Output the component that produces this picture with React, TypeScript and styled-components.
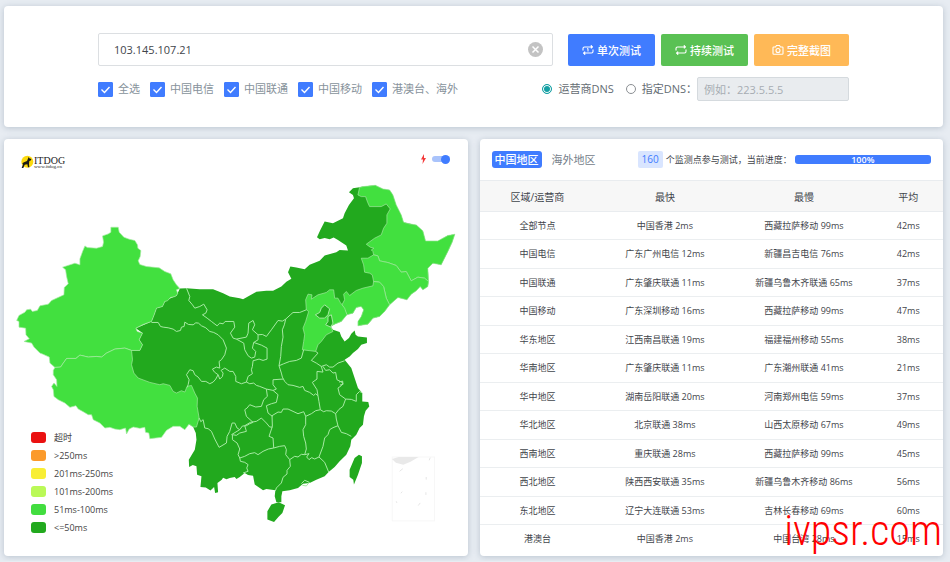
import React, { useState } from "react";
import styled, { createGlobalStyle, css } from "styled-components";

const Global = createGlobalStyle`
  * { box-sizing: border-box; }
  body {
    margin: 0;
    background: #e7ecf2;
    color: #3f454b;
    font-family: "Open Sans", "Noto Sans CJK SC", sans-serif;
    font-size: 11px;
  }
  button, input { font: inherit; }
`;

const Page = styled.main`
  display: flex;
  flex-direction: column;
  gap: 12px;
  padding: 6px 7px 5px 4px;
`;

const Card = styled.section`
  background: #fff;
  border-radius: 4px;
  box-shadow: 0 1px 6px rgba(70, 90, 115, 0.28);
`;

const SearchCard = styled(Card)`
  display: flex;
  flex-direction: column;
  gap: 11px;
  padding: 27px 94px 26px;
`;

const Line = styled.div`
  display: flex;
  align-items: center;
  justify-content: space-between;
  gap: 15px;
`;

const HostBox = styled.label`
  display: flex;
  flex: 1;
  align-items: center;
  height: 33px;
  padding: 0 9px 0 15px;
  border: 1px solid #dcdfe2;
  border-radius: 2px;
`;

const HostInput = styled.input`
  flex: 1;
  min-width: 0;
  padding: 0;
  border: 0;
  outline: 0;
  background: none;
  color: #3f454b;
`;

const ClearButton = styled.button`
  display: flex;
  padding: 0;
  border: 0;
  background: none;
`;

const Actions = styled.div`
  display: flex;
  gap: 6px;
`;

const ActionButton = styled.button<{ $color: string; $wide?: boolean }>`
  display: flex;
  align-items: center;
  justify-content: center;
  gap: 3px;
  height: 32px;
  padding: 0 ${(p) => (p.$wide ? 18 : 14)}px;
  border: 0;
  border-radius: 2px;
  background: ${(p) => p.$color};
  color: #fff;
  font-weight: 500;
  white-space: nowrap;
`;

const Options = styled.div<{ $gap: number }>`
  display: flex;
  align-items: center;
  gap: ${(p) => p.$gap}px;
`;

const Option = styled.label<{ $dark?: boolean }>`
  display: flex;
  align-items: center;
  gap: 5px;
  color: ${(p) => (p.$dark ? "#646c73" : "#87929b")};
  line-height: 16px;
  white-space: nowrap;
`;

const CheckBox = styled.input`
  appearance: none;
  width: 15px;
  height: 15px;
  margin: 0;
  border-radius: 1px;
  background: #fff;
  border: 1px solid #407cff;
  &:checked {
    background: #407cff
      url("data:image/svg+xml,%3Csvg xmlns='http://www.w3.org/2000/svg' viewBox='0 0 13 13'%3E%3Cpath d='M2.5 6.5l3 3 5-5.5' fill='none' stroke='white' stroke-width='1.4'/%3E%3C/svg%3E");
  }
`;

const Radio = styled.input`
  appearance: none;
  width: 10px;
  height: 10px;
  margin: 0 1px 0 0;
  border: 1px solid #8b8f93;
  border-radius: 50%;
  &:checked {
    border-color: #14a0a4;
    background: #14a0a4;
    box-shadow: inset 0 0 0 1px #fff;
  }
`;

const DnsField = styled.div`
  display: flex;
  align-items: center;
`;

const DnsInput = styled.input`
  width: 152px;
  height: 24px;
  padding: 0 6px;
  border: 1px solid #d5dade;
  border-radius: 2px;
  background: #e9ecef;
  &::placeholder { color: #a7adb3; }
`;

const Columns = styled.div`
  display: grid;
  grid-template-columns: 1fr 1fr;
  gap: 12px;
`;

const MapCard = styled(Card)`
  display: grid;
  > * { grid-area: 1 / 1; }
`;

const MapHead = styled.header`
  z-index: 1;
  display: flex;
  align-self: start;
  align-items: flex-start;
  justify-content: space-between;
  padding: 15px 18px 0 16px;
`;

const Brand = styled.div`
  display: flex;
  align-items: center;
  padding-top: 1px;
`;

const BrandName = styled.div`
  display: flex;
  flex-direction: column;
  color: #222;
  font-family: "Liberation Serif", serif;
  font-size: 10px;
  line-height: 9px;
  small { font-size: 5px; line-height: 4px; }
`;

const SwitchLabel = styled.label`
  display: flex;
  align-items: center;
  gap: 5px;
`;

const Switch = styled.input`
  appearance: none;
  display: flex;
  align-items: center;
  justify-content: flex-end;
  width: 18px;
  height: 6px;
  margin: 0;
  border-radius: 3px;
  background: #a9c3fb;
  &::after {
    content: "";
    width: 9px;
    height: 9px;
    border-radius: 50%;
    background: #407cff;
  }
`;

const MapDrawing = styled.svg`
  display: block;
  width: 100%;
`;

const Legend = styled.ul`
  z-index: 1;
  display: flex;
  flex-direction: column;
  align-self: end;
  justify-self: start;
  gap: 6px;
  margin: 0;
  padding: 0 0 22px 27px;
  list-style: none;
`;

const LegendItem = styled.li<{ $color: string }>`
  display: flex;
  align-items: center;
  gap: 8px;
  color: #444;
  font-size: 9px;
  line-height: 12px;
  &::before {
    content: "";
    width: 15px;
    height: 11px;
    border-radius: 3px;
    background: ${(p) => p.$color};
  }
`;

const ResultCard = styled(Card)`
  position: relative;
`;

const ResultHead = styled.header`
  display: flex;
  align-items: center;
  height: 41px;
  padding: 0 12px;
`;

const Tab = styled.button<{ $active?: boolean }>`
  height: 17px;
  padding: 0 3px;
  border: 0;
  border-radius: 3px;
  background: none;
  color: #75808a;
  line-height: 16px;
  white-space: nowrap;
  & + & { margin-left: 7px; }
  ${(p) => p.$active && css`
    background: #407cff;
    color: #fff;
    font-weight: 500;
  `}
`;

const Progress = styled.div`
  display: flex;
  flex: 1;
  align-items: center;
  gap: 3px;
  margin-left: 39px;
  font-size: 9px;
  white-space: nowrap;
`;

const Count = styled.span`
  padding: 0 4px;
  border-radius: 2px;
  background: #d9e5ff;
  color: #407cff;
  font-size: 10px;
  line-height: 17px;
`;

const Bar = styled.div`
  flex: 1;
  border-radius: 3px;
  background: #e9ecef;
`;

const BarFill = styled.div`
  border-radius: 3px;
  background: #407cff;
  color: #fff;
  font-weight: 600;
  line-height: 9px;
  text-align: center;
`;

const Table = styled.table`
  width: 100%;
  border-collapse: collapse;
  table-layout: fixed;
  text-align: center;
`;

const HeadCell = styled.th<{ $width: number }>`
  width: ${(p) => p.$width}%;
  height: 31px;
  padding: 0;
  border-top: 1px solid #e9ecef;
  border-bottom: 1px solid #e9ecef;
  background: #f7f7f7;
  font-size: 10px;
  font-weight: 400;
`;

const Row = styled.tr`
  height: 28px;
  &:nth-child(even) { height: 29px; }
  & + & { border-top: 1px solid #ebeef0; }
`;

const Cell = styled.td`
  padding: 0;
  font-size: 9px;
  line-height: 14px;
  white-space: nowrap;
`;

const Watermark = styled.span`
  position: absolute;
  right: 1px;
  bottom: 0;
  color: #f00;
  font-family: "Roboto Condensed", Roboto, sans-serif;
  font-size: 42px;
  font-weight: 300;
  line-height: 50px;
  pointer-events: none;
`;

const carriers = ["全选", "中国电信", "中国联通", "中国移动", "港澳台、海外"];

const legend = [
  ["#ea1111", "超时"],
  ["#fb9a2b", ">250ms"],
  ["#f8ee35", "201ms-250ms"],
  ["#baf957", "101ms-200ms"],
  ["#42dd3f", "51ms-100ms"],
  ["#22a91e", "<=50ms"],
];

const columns: [string, number][] = [["区域/运营商", 25], ["最快", 30], ["最慢", 30], ["平均", 15]];

const rows = [
  ["全部节点", "中国香港 2ms", "西藏拉萨移动 99ms", "42ms"],
  ["中国电信", "广东广州电信 12ms", "新疆昌吉电信 76ms", "42ms"],
  ["中国联通", "广东肇庆联通 11ms", "新疆乌鲁木齐联通 65ms", "37ms"],
  ["中国移动", "广东深圳移动 16ms", "西藏拉萨移动 99ms", "47ms"],
  ["华东地区", "江西南昌联通 19ms", "福建福州移动 55ms", "38ms"],
  ["华南地区", "广东肇庆联通 11ms", "广东潮州联通 41ms", "21ms"],
  ["华中地区", "湖南岳阳联通 20ms", "河南郑州电信 59ms", "37ms"],
  ["华北地区", "北京联通 38ms", "山西太原移动 67ms", "49ms"],
  ["西南地区", "重庆联通 28ms", "西藏拉萨移动 99ms", "45ms"],
  ["西北地区", "陕西西安联通 35ms", "新疆乌鲁木齐移动 86ms", "56ms"],
  ["东北地区", "辽宁大连联通 53ms", "吉林长春移动 69ms", "60ms"],
  ["港澳台", "中国香港 2ms", "中国台湾 28ms", "15ms"],
];

const mainland =
  "540,866 560,865 600,868 640,868 670,880 690,890 720,895 730,898 750,887 770,876 800,873 820,873 845,860 860,846 875,837 865,817 872,800 890,803 915,808 930,795 960,783 975,767 1010,757 1020,750 1045,752 1040,737 1015,720 1002,713 990,718 975,714 960,718 952,712 962,690 975,665 1000,670 1030,655 1035,640 1048,615 1063,595 1060,585 1048,577 1060,565 1080,562 1090,560 1127,556 1150,567 1170,570 1180,585 1190,615 1205,645 1212,667 1250,675 1270,693 1278,723 1315,723 1345,707 1366,703 1358,727 1345,755 1325,795 1300,790 1285,805 1287,845 1285,860 1270,870 1262,860 1250,873 1235,883 1222,900 1195,893 1170,915 1155,935 1140,950 1120,955 1105,973 1075,978 1075,965 1085,950 1092,930 1085,920 1070,923 1060,940 1042,945 1025,965 1005,973 993,980 1000,990 1020,997 1025,1010 1035,1025 1048,1015 1055,1002 1065,992 1068,1005 1075,1010 1102,1013 1102,1030 1085,1035 1075,1048 1060,1060 1050,1070 1035,1080 1055,1105 1065,1135 1075,1165 1088,1180 1088,1205 1106,1207 1109,1220 1098,1233 1093,1250 1090,1275 1080,1285 1070,1305 1055,1320 1052,1340 1040,1365 1020,1385 1005,1402 987,1417 975,1430 950,1440 930,1450 910,1452 895,1465 870,1472 848,1475 845,1490 845,1508 830,1508 825,1490 827,1472 800,1468 790,1472 765,1455 760,1428 745,1426 735,1420 720,1432 710,1438 705,1432 690,1435 680,1439 670,1434 666,1440 653,1450 655,1478 646,1480 643,1462 632,1473 618,1464 602,1462 605,1430 592,1425 590,1400 579,1396 568,1402 567,1380 585,1350 590,1320 588,1300 580,1282 500,1230 350,1130 380,1052 420,1052 428,1035 418,1020 428,1000 408,985 455,965 463,945 470,925 488,920 495,905 512,895 530,888";

const brightRegions = [
  "333,682 355,682 358,697 372,712 388,718 405,722 413,735 414,745 423,752 421,770 415,783 420,794 440,800 478,804 495,815 513,822 520,840 530,855 540,866 530,870 534,882 526,890 512,893 503,903 495,905 488,920 470,925 463,945 455,965 430,974 408,985 412,995 428,1000 418,1020 428,1035 420,1052 395,1052 375,1045 345,1048 320,1060 305,1072 290,1070 265,1072 240,1066 228,1076 200,1076 190,1090 182,1102 165,1103 150,1090 148,1072 128,1063 120,1060 102,1042 95,1030 72,1025 88,1017 78,1005 77,985 57,982 57,965 50,962 57,947 75,937 80,930 92,928 97,935 112,932 120,918 145,913 155,902 192,885 193,863 205,852 200,830 197,810 188,802 225,790 240,795 240,777 248,755 255,738 262,743 290,745 308,740 311,727 308,708 325,702 333,697",
  "165,1103 182,1102 190,1090 200,1076 228,1076 240,1066 265,1072 290,1070 305,1072 320,1060 345,1048 375,1045 395,1052 398,1080 395,1095 402,1120 415,1135 450,1148 480,1155 490,1152 510,1157 520,1175 530,1180 545,1173 555,1177 562,1160 575,1157 585,1180 593,1195 592,1220 598,1255 590,1282 580,1282 568,1273 555,1290 540,1280 520,1280 500,1292 485,1313 450,1317 447,1300 437,1298 435,1283 420,1286 400,1282 388,1288 380,1303 377,1285 360,1290 345,1288 330,1283 315,1285 300,1270 280,1260 275,1245 265,1245 250,1236 235,1228 228,1218 210,1223 195,1210 175,1200 162,1190 160,1170 155,1160 162,1150 171,1160 170,1140 160,1125 160,1112",
  "1080,562 1090,560 1127,556 1150,567 1170,570 1180,585 1190,615 1205,645 1212,667 1230,672 1250,675 1270,693 1278,723 1315,723 1345,707 1366,703 1358,727 1345,755 1325,795 1300,790 1285,805 1287,845 1275,835 1255,832 1235,843 1220,815 1205,817 1190,797 1165,788 1140,783 1135,768 1122,765 1120,755 1115,750 1123,745 1112,742 1100,733 1125,715 1145,705 1152,685 1162,670 1162,645 1172,627 1160,612 1145,620 1110,620 1104,607 1098,590 1085,590 1075,585",
  "1122,765 1135,768 1140,783 1165,788 1190,797 1205,817 1220,815 1235,843 1255,832 1275,835 1287,845 1285,860 1270,870 1262,860 1250,873 1235,883 1222,900 1195,893 1170,915 1160,895 1152,860 1140,847 1122,845 1118,825 1110,820 1095,817 1092,795 1085,775 1105,775",
  "1122,845 1140,847 1152,860 1160,895 1170,915 1155,935 1140,950 1120,955 1105,973 1075,978 1075,965 1085,950 1092,930 1085,920 1070,923 1060,940 1042,945 1027,915 1035,900 1032,883 1040,875 1050,887 1070,872 1090,865 1120,858",
  "1042,945 1035,925 1022,908 1015,895 1005,895 1002,870 990,870 980,878 955,885 935,898 937,885 925,883 918,900 920,930 927,935 918,965 910,985 915,1005 912,1025 908,1050 948,1055 955,1035 965,1025 980,1005 1000,995 993,980 1005,973 1025,965",
];

const darkCities = [
  "975,915 990,927 985,945 975,955 960,955 947,945 960,938 965,925",
  "985,950 995,945 1000,970 993,982 978,975 985,965",
];

const borders = [
  "560,865 570,890 567,902 578,915 585,925 600,920 612,913 622,930 618,940 608,945 622,955 635,965 652,978 660,970 670,972 676,965 702,965 705,982 692,1000 700,1015 710,1018 740,1012 745,1000 747,970 760,962 765,975 758,990 775,1005 788,1004 800,1010 815,990 835,962 848,964 858,958 872,945 880,938 900,938 920,930",
  "710,1018 732,1030 735,1050 745,1068 755,1075 765,1072 768,1055 758,1045 762,1028 775,1020 775,1005",
  "762,1028 785,1036 802,1045 802,1078 790,1082 778,1078 760,1083 758,1100 755,1110 758,1122 745,1130 740,1147",
  "455,968 475,968 482,980 490,982 505,984 520,988 530,995 542,992 545,982 553,980 555,967 566,974 580,975 588,969 596,970 605,978 618,984 630,995 642,998 655,1005 670,1020 680,1045 675,1065 665,1080 658,1085 660,1105 650,1102 638,1108 644,1117 655,1125 648,1138 640,1147 630,1152 618,1145 605,1145 595,1132 585,1125 580,1113 570,1110 560,1125 568,1140 565,1155 562,1163",
  "655,1125 660,1138 668,1130 670,1120 664,1112 675,1105 690,1115 700,1115 708,1130 708,1145 725,1152 740,1147 750,1152 762,1150 770,1157 780,1160 800,1168 820,1172 835,1185 830,1208 815,1212 800,1218 805,1240 818,1250",
  "858,958 854,975 848,990 850,1012 845,1040 843,1070 838,1098 852,1092 870,1085 890,1082 905,1075 912,1050",
  "838,1098 845,1120 848,1132 855,1145 865,1155 880,1157 900,1163 910,1160 915,1172 930,1178 942,1187 948,1182 955,1188 952,1170 938,1148 952,1138 952,1115 970,1117 965,1100 950,1090 935,1082 955,1060 948,1055",
  "965,1100 980,1095 990,1102 1000,1102 1015,1090 1035,1083",
  "970,1100 978,1112 990,1110 1000,1120 1008,1118 1012,1140 1022,1145 1030,1150 1025,1158 1015,1165 1020,1185 1038,1198 1055,1199 1070,1205 1070,1185 1080,1175 1088,1180",
  "1038,1198 1030,1220 1018,1229 1008,1242 1010,1258 1015,1278 1025,1298 1040,1302 1055,1310",
  "955,1188 958,1206 962,1230 972,1236 980,1233 995,1234 1008,1242",
  "1015,1278 1000,1284 990,1290 985,1305 975,1315 970,1340 958,1372 975,1388 987,1417",
  "958,1372 945,1378 936,1374 928,1380 921,1372 928,1362 915,1365 920,1348 918,1330 912,1310 910,1290 918,1275 918,1250 935,1242 948,1233 962,1230",
  "918,1250 912,1236 895,1242 880,1235 865,1228 850,1228 845,1238 835,1237 817,1248 818,1280 808,1310 820,1315 822,1345 840,1340 855,1338 860,1350 858,1365 870,1380 885,1370 895,1372 905,1364 915,1365",
  "870,1380 872,1400 862,1412 862,1423 850,1433 845,1450 830,1465 827,1474",
  "822,1345 806,1348 790,1355 775,1365 765,1359 750,1362 735,1370 720,1375 715,1365 720,1348 712,1330 698,1320 698,1305 710,1307 720,1300 740,1295 735,1278 752,1268 770,1265 785,1255 800,1270 810,1282 818,1282",
  "720,1375 722,1385 735,1388 745,1395 741,1405 745,1415 730,1420",
  "598,1255 603,1266 610,1260 615,1285 625,1287 635,1295 645,1318 658,1343 680,1330 682,1310 690,1295 697,1270 705,1270 712,1285 720,1290 695,1305",
  "720,1290 728,1279 740,1278 750,1272 760,1268 740,1250 735,1230 742,1225 750,1215 768,1222 785,1220 792,1200 803,1190 800,1168",
  "820,1172 830,1168 820,1155 820,1140 850,1138",
  "905,1452 915,1442 929,1448 920,1459 908,1457",
  "1018,1147 1029,1144 1030,1154 1021,1156",
];

function ChinaMap() {
  return (
    <MapDrawing viewBox="12 417 1392 1251" role="img" aria-label="中国延迟地图">
      <g strokeLinejoin="round">
        <g fill="#22a91e">
          <polygon points={mainland} />
          <polygon points="1078,1365 1087,1370 1087,1390 1075,1425 1063,1455 1061,1440 1050,1432 1050,1410 1065,1375" />
          <polygon points="815,1515 837,1508 856,1517 848,1540 836,1552 823,1567 803,1560 803,1535" />
        </g>
        <g fill="#42e03f" stroke="#a6eaa3" strokeWidth="2">
          {brightRegions.map((p) => <polygon key={p} points={p} />)}
        </g>
        <g fill="#22a91e" stroke="#a6eaa3" strokeWidth="3">
          {darkCities.map((p) => <polygon key={p} points={p} />)}
        </g>
        <g fill="none" stroke="#a6eaa3" strokeWidth="3">
          {borders.map((p) => <polyline key={p} points={p} />)}
        </g>
      </g>
      <rect x="1178" y="1372" width="127" height="192" fill="none" stroke="#f7f7f7" strokeWidth="3" />
      <path d="M1177 1378l20-6h60l-24 14-22 9-22-6z" fill="#e9e9e9" />
      <path d="M1200 1415l10-8M1289 1382l3-8M1280 1440v-8M1208 1476l-4 5M1279 1478v8M1262 1510l-6 8M1190 1505l2 5" stroke="#e6e6e6" strokeWidth="3" />
    </MapDrawing>
  );
}

function RepeatIcon({ once }: { once?: boolean }) {
  return (
    <svg width="12" height="12" viewBox="0 0 24 24" fill="none" stroke="currentColor" strokeWidth="2.2" aria-hidden="true">
      <path d="M2 13V9a3 3 0 0 1 3-3h15M22 11v4a3 3 0 0 1-3 3H4" />
      <path d="M18 2l4 4-4 3zM6 15l-4 3 4 4z" fill="currentColor" strokeWidth="1" />
      {once && <path d="M10 10l2-1v6" strokeWidth="2" />}
    </svg>
  );
}

function CameraIcon() {
  return (
    <svg width="12" height="12" viewBox="0 0 24 24" fill="none" stroke="currentColor" strokeWidth="2.2" aria-hidden="true">
      <path d="M2 7.500a1.500 1.500 0 0 1 1.500-1.500H7l2-3h6l2 3h3.500A1.500 1.500 0 0 1 22 7.500V19a1.500 1.500 0 0 1-1.500 1.500h-17A1.500 1.500 0 0 1 2 19z" />
      <circle cx="12" cy="13" r="4" />
    </svg>
  );
}

function DogLogo() {
  return (
    <svg width="14" height="14" viewBox="0 0 42 42" aria-hidden="true">
      <circle cx="22" cy="20" r="18" fill="#fbd90c" />
      <path d="M26 6l2 4 6 2-1 4-5 2-1 9 1 10h-4l-2-9-8 1-4 10H5l4-11-2-3 5-3 9-4z" fill="#1b1a14" />
    </svg>
  );
}

export default function App() {
  const [host, setHost] = useState("103.145.107.21");
  const progress = 100;
  return (
    <>
      <Global />
      <Page>
        <SearchCard>
          <Line>
            <HostBox>
              <HostInput aria-label="IP" value={host} onChange={(e) => setHost(e.target.value)} />
              <ClearButton type="button" aria-label="清除" onClick={() => setHost("")}>
                <svg width="15" height="15" viewBox="0 0 15 15" aria-hidden="true">
                  <circle cx="7.500" cy="7.500" r="7.500" fill="#c3c3c3" />
                  <path d="M4.500 4.500l6 6M10.500 4.500l-6 6" stroke="#fff" strokeWidth="1.500" />
                </svg>
              </ClearButton>
            </HostBox>
            <Actions>
              <ActionButton type="button" $color="#407cff"><RepeatIcon once />单次测试</ActionButton>
              <ActionButton type="button" $color="#5ac154"><RepeatIcon />持续测试</ActionButton>
              <ActionButton type="button" $color="#ffb957" $wide><CameraIcon />完整截图</ActionButton>
            </Actions>
          </Line>
          <Line>
            <Options $gap={10}>
              {carriers.map((name) => (
                <Option key={name}><CheckBox type="checkbox" defaultChecked />{name}</Option>
              ))}
            </Options>
            <Options $gap={12}>
              <Option $dark><Radio type="radio" name="dns" defaultChecked />运营商DNS</Option>
              <DnsField>
                <Option $dark><Radio type="radio" name="dns" />指定DNS：</Option>
                <DnsInput aria-label="DNS" placeholder="例如：223.5.5.5" disabled />
              </DnsField>
            </Options>
          </Line>
        </SearchCard>
        <Columns>
          <MapCard>
            <ChinaMap />
            <MapHead>
              <Brand>
                <DogLogo />
                <BrandName>ITDOG<small>www.itdog.cn</small></BrandName>
              </Brand>
              <SwitchLabel>
                <svg width="7" height="10" viewBox="0 0 7 10" aria-hidden="true">
                  <path d="M4 0L1 5.500h2L2.500 10 6 4H4z" fill="#f33a3a" />
                </svg>
                <Switch type="checkbox" role="switch" aria-label="极速模式" defaultChecked />
              </SwitchLabel>
            </MapHead>
            <Legend>
              {legend.map(([color, text]) => <LegendItem key={text} $color={color}>{text}</LegendItem>)}
            </Legend>
          </MapCard>
          <ResultCard>
            <ResultHead>
              <Tab type="button" $active>中国地区</Tab>
              <Tab type="button">海外地区</Tab>
              <Progress>
                <Count>160</Count>
                <span>个监测点参与测试，当前进度：</span>
                <Bar><BarFill style={{ width: `${progress}%` }}>{progress}%</BarFill></Bar>
              </Progress>
            </ResultHead>
            <Table>
              <thead>
                <tr>{columns.map(([name, width]) => <HeadCell key={name} $width={width}>{name}</HeadCell>)}</tr>
              </thead>
              <tbody>
                {rows.map((row) => (
                  <Row key={row[0]}>{row.map((text, i) => <Cell key={i}>{text}</Cell>)}</Row>
                ))}
              </tbody>
            </Table>
            <Watermark>ivpsr.com</Watermark>
          </ResultCard>
        </Columns>
      </Page>
    </>
  );
}
